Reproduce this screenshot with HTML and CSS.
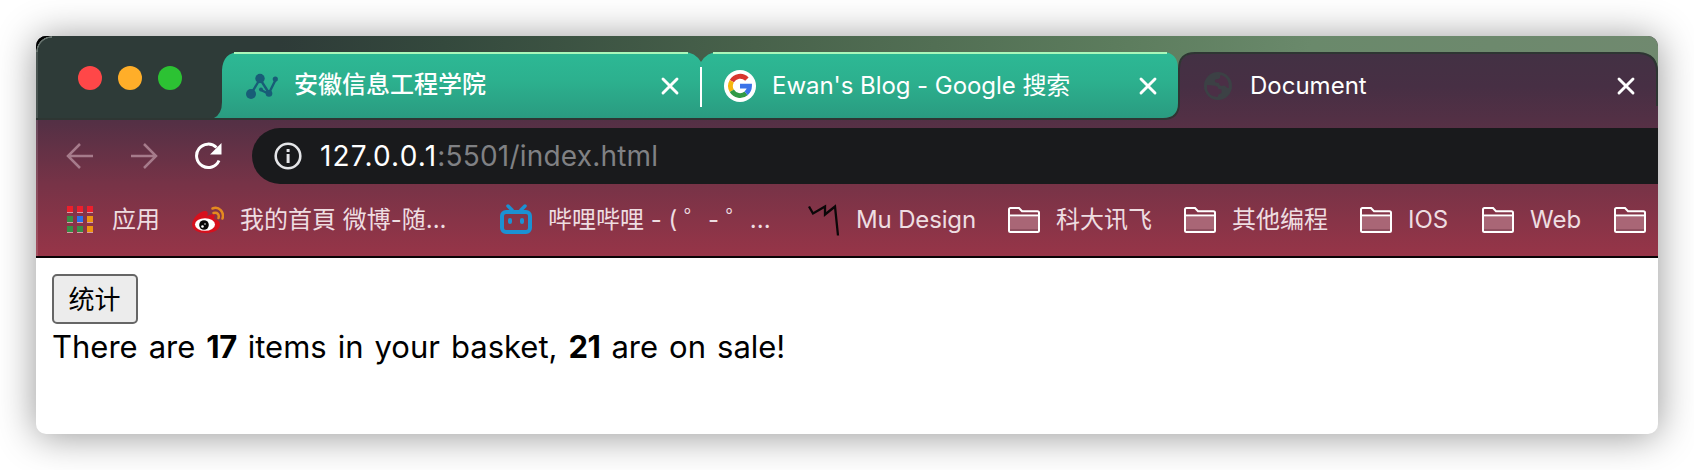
FILE: index.html
```html
<!DOCTYPE html>
<html lang="zh-CN">
<head>
<meta charset="utf-8">
<title>Document</title>
<link rel="stylesheet" href="styles.css">
</head>
<body>
<svg class="defs" width="0" height="0" aria-hidden="true">
  <symbol id="close" viewBox="0 0 20 20"><path d="M3 3l14 14M17 3L3 17" fill="none" stroke="#fff" stroke-width="2.9" stroke-linecap="round"/></symbol>
  <symbol id="folder" viewBox="0 0 32 32"><path d="M2 13h28v15H2z" fill="#a96676"/><path d="M2 25h28v3H2z" fill="#8f5060"/><path d="M1 27V5.500Q1 4 2.500 4H11l3 3.200h15.500q1.500 0 1.500 1.500V26.500q0 1.500-1.500 1.500h-27Q1 28 1 26.500zM1 11.500h30" fill="none" stroke="#fff" stroke-width="2"/></symbol>
</svg>
<div class="frame">
  <span class="corner"></span>
  <div class="chrome">
    <div class="strip">
      <svg class="tab-shapes" width="1622" height="84" viewBox="0 0 1622 84">
        <defs><linearGradient id="tab" x1="0" y1="0" x2="0" y2="1"><stop offset="0" stop-color="#2db995"/><stop offset=".45" stop-color="#2cb08e"/><stop offset="1" stop-color="#2a9b80"/></linearGradient>
        <linearGradient id="act" x1="0" y1="0" x2="0" y2="1"><stop offset="0" stop-color="#433144"/><stop offset=".5" stop-color="#472f44"/><stop offset="1" stop-color="#533045"/></linearGradient></defs>
        <path d="M1120 84V60H1143V34Q1144 17 1160 17H1604Q1620 17 1622 34V84z" fill="url(#act)"/>
        <path d="M0 83H1127Q1143 83 1143 67V33Q1143 17 1159 17H1603Q1621 18 1621 36V70" fill="none" stroke="#2e3633" stroke-width="2"/>
        <path d="M178 82Q186 78 186 66V34Q187 16 204 16H648Q659 16 665 26Q671 16 682 16H1126Q1142 16 1142 33V67Q1142 82 1127 82z" fill="url(#tab)"/>
        <path d="M198 17H652M677 17H1131" stroke="#a9f7ba" stroke-width="2"/>
        <path d="M665 31V71" stroke="#fff" stroke-width="2"/>
      </svg>
      <div class="lights"><i class="red"></i><i class="amber"></i><i class="green"></i></div>
      <div class="tab">
        <svg width="32" height="32" viewBox="0 0 32 32"><path d="M5 24L14 9l9 14 7-14M15 20l8 4" fill="none" stroke="#185d77" stroke-width="2.400"/><g fill="#185d77"><circle cx="5" cy="24" r="5"/><circle cx="14" cy="8.500" r="4.700"/><circle cx="15" cy="19.500" r="2"/><circle cx="23" cy="23.500" r="3.300"/><circle cx="29.300" cy="9" r="2.600"/></g></svg>
        <span class="title">安徽信息工程学院</span><svg class="x"><use href="#close"/></svg>
      </div>
      <div class="tab">
        <svg width="32" height="32" viewBox="0 0 32 32"><circle cx="16" cy="16" r="16" fill="#fff"/><g fill="none" stroke-width="4.800"><path d="M22.900 9.100A9.500 9.500 0 0 0 7.800 11.200" stroke="#d8362f"/><path d="M7.800 11.200A9.500 9.500 0 0 0 7.800 20.800" stroke="#f6b60d"/><path d="M7.800 20.800A9.500 9.500 0 0 0 22.100 23.300" stroke="#319a47"/><path d="M22.100 23.300A9.500 9.500 0 0 0 25.500 16.200H16" stroke="#3b73e8"/></g></svg>
        <span class="title ewan">Ewan's Blog - Google 搜索</span><svg class="x"><use href="#close"/></svg>
      </div>
      <div class="tab">
        <svg width="32" height="32" viewBox="0 0 32 32"><circle cx="16" cy="16" r="14" fill="#3c4145"/><path d="M18.500 5q6 1 8 8l.3 5q-2.300 0-2.800-1.500-2-1.500-4-.5-3-.5-3-3l-3-.5q-2-1-.5-3l3-.5q2-1 2-4zM5 15l6 .5q5 0 5.500 3.500l3 .5v3.500l-3 1.500-1 2.500Q7 26.500 5 19z" fill="#4b2f46"/></svg>
        <span class="title doc">Document</span><svg class="x"><use href="#close"/></svg>
      </div>
    </div>
    <div class="toolbar">
      <svg width="28" height="28" viewBox="0 0 28 28"><path d="M27 14H2M14 2L2 14l12 12" fill="none" stroke="#a67b8b" stroke-width="2.500"/></svg>
      <svg width="28" height="28" viewBox="0 0 28 28"><path d="M1 14h25M14 2l12 12-12 12" fill="none" stroke="#a67b8b" stroke-width="2.500"/></svg>
      <svg width="28" height="28" viewBox="0 0 28 28"><path d="M22.500 5.500A11.700 11.700 0 1 0 25 18.500" fill="none" stroke="#fff" stroke-width="3"/><path d="M27.500 1v11.500H16z" fill="#fff"/></svg>
      <div class="omnibox">
        <svg width="28" height="28" viewBox="0 0 28 28"><circle cx="14" cy="14" r="12.300" fill="none" stroke="#e4e5e8" stroke-width="2.600"/><path d="M12.600 12h3v9h-3zM12.600 7h3v3h-3z" fill="#e4e5e8"/></svg>
        <span class="host">127.0.0.1</span><span class="path">:5501/index.html</span>
      </div>
    </div>
    <div class="bookmarks">
      <div class="mark w48"><svg viewBox="0 0 32 32"><g fill="#d59aa5"><path d="M3 8h6v1H3zM13 8h6v1h-6zM23 8h6v1h-6zM3 18h6v1H3zM13 18h6v1h-6zM23 18h6v1h-6zM3 28h6v1H3zM13 28h6v1h-6zM23 28h6v1h-6z"/></g><path d="M3 2h6v6H3zM13 2h6v6h-6zM23 2h6v6h-6z" fill="#ec1f2c"/><path d="M3 12h6v6H3zM3 22h6v6H3z" fill="#388e46"/><path d="M13 12h6v6h-6z" fill="#2773ee"/><path d="M13 22h6v6h-6z" fill="#388e46"/><path d="M23 12h6v6h-6zM23 22h6v6h-6z" fill="#ee9410"/></svg><span>应用</span></div>
      <div class="mark w228"><svg viewBox="0 0 32 32"><path d="M0 20C1 13 9 6 14 7q3 1 1 5 6-3 8-1l-1 4q6 1 6 6c-1 6-8 8-14 8C6 29 0 26 0 20z" fill="#d7101d"/><ellipse cx="13" cy="20.500" rx="10" ry="6.300" fill="#fff"/><circle cx="12" cy="21" r="4.800" fill="#050505"/><circle cx="10.500" cy="22.500" r="1.300" fill="#fff"/><circle cx="13" cy="20" r=".8" fill="#fff"/><path d="M20.500 4.500C27 2 32.500 8 30.500 14.500M21.500 9c4-1 6 1.500 5 5" fill="none" stroke="#e58a1f" stroke-width="2.500" stroke-linecap="round"/></svg><span>我的首頁 微博-随...</span></div>
      <div class="mark w228"><svg viewBox="0 0 32 32"><rect x="2" y="8" width="28" height="20" rx="4" fill="none" stroke="#1b91d3" stroke-width="4"/><path d="M8 2l4 4M25 2l-4 4" stroke="#1b91d3" stroke-width="3.500" stroke-linecap="round"/><rect x="8" y="14" width="4" height="6" rx="2" fill="#1b91d3"/><rect x="20" y="14" width="4" height="6" rx="2" fill="#1b91d3"/></svg><span>哔哩哔哩 - ( ゜- ゜<b>...</b></span></div>
      <div class="mark w120"><svg viewBox="0 0 32 32"><path d="M1 2.500l4 7 12-7v8l10-8 3 29" fill="none" stroke="#0b0708" stroke-width="2.300"/></svg><span class="mu">Mu Design</span></div>
      <div class="mark w96"><svg><use href="#folder"/></svg><span>科大讯飞</span></div>
      <div class="mark w96"><svg><use href="#folder"/></svg><span>其他编程</span></div>
      <div class="mark w42"><svg><use href="#folder"/></svg><span>IOS</span></div>
      <div class="mark w52"><svg><use href="#folder"/></svg><span>Web</span></div>
      <div class="mark"><svg><use href="#folder"/></svg></div>
    </div>
  </div>
  <main class="page">
    <button class="count">统计</button>
    <p class="message">There are <b>17</b> items in your basket, <b>21</b> are on sale!</p>
  </main>
</div>
</body>
</html>
```
FILE: styles.css
```css
* { box-sizing: border-box; }
body { margin: 0; height: 470px; padding: 36px; overflow: hidden; background: #fff; font-family: Inter, "Noto Sans CJK SC", sans-serif; }
.defs { position: absolute; }
svg { display: block; flex: none; }
.frame { position: relative; width: 1622px; height: 398px; border-radius: 10px; overflow: hidden; background: #fff; box-shadow: 0 2px 38px rgba(0,0,0,.42); }
.corner { position: absolute; left: 0; top: 0; width: 16px; height: 16px; background: radial-gradient(circle at 100% 100%, transparent 14px, #68746f 14.500px 15.500px, #000 16px); z-index: 2; }
.chrome { height: 222px; border-bottom: 2px solid #090305; background: linear-gradient(#433144 16px, #533045 84px, #773347 148px, #973548 220px); box-shadow: inset 2px 0 rgba(255,255,255,.13); }
.strip { position: relative; display: flex; height: 84px; padding-left: 42px; overflow: hidden; background: linear-gradient(100deg, #2e3b38 0 15%, #34493d 25%, #48624b 44%, #5c7c5d 66%, #6a896b 78%, #70896f 100%); box-shadow: inset 2px 0 rgba(255,255,255,.13); }
.tab-shapes { position: absolute; left: 0; top: 0; }
.lights { position: relative; display: flex; flex: none; gap: 16px; width: 168px; padding-top: 30px; }
.lights i { width: 24px; height: 24px; border-radius: 50%; }
.red { background: #ff4748; }
.amber { background: #ffae29; }
.green { background: #2cc233; }
.tab { position: relative; display: flex; flex: none; align-items: center; width: 478px; height: 68px; margin-top: 16px; color: #fff; font-size: 24px; }
.tab .title { flex: 1; margin-left: 16px; padding-bottom: 2px; font-weight: 500; line-height: 32px; white-space: nowrap; }
.tab .ewan { padding-bottom: 0; font-weight: 400; letter-spacing: -.05px; }
.tab .doc { padding-bottom: 0; font-weight: 400; }
.tab .x { width: 20px; height: 20px; margin-right: 44px; }
.toolbar { display: flex; align-items: center; height: 72px; padding: 0 0 0 30px; }
.toolbar > svg { margin-right: 36px; }
.omnibox { display: flex; align-items: center; flex: 1; height: 56px; margin-left: -6px; padding-left: 22px; border-radius: 28px 0 0 28px; background: #191a1c; font-size: 28px; white-space: nowrap; }
.host { margin-left: 18px; color: #fff; letter-spacing: 1.200px; }
.path { color: #808184; letter-spacing: .2px; }
.bookmarks { display: flex; gap: 32px; height: 64px; padding: 12px 0 0 28px; color: #eedde1; font-size: 24px; }
.mark { display: flex; align-items: center; flex: none; gap: 16px; height: 32px; white-space: nowrap; }
.mark svg { width: 32px; height: 32px; }
.mark span { display: block; line-height: 32px; }
.mark b { font-weight: 400; }
.mu { letter-spacing: -.15px; }
.w48 span { width: 48px; }
.w228 span { width: 228px; }
.w120 span { width: 120px; }
.w96 span { width: 96px; }
.w42 span { width: 42px; }
.w52 span { width: 52px; }
.page { padding: 16px; }
.count { display: block; width: 86px; height: 50px; padding: 0 1px 3px 0; border: 2px solid #666; border-radius: 5px; background: #ececec; color: #000; font: 26px "Noto Sans CJK SC", sans-serif; line-height: 42px; }
.message { margin: 0; color: #000; font-size: 31px; line-height: 46px; word-spacing: 2.300px; white-space: nowrap; }
.message b { letter-spacing: -.5px; }
```
